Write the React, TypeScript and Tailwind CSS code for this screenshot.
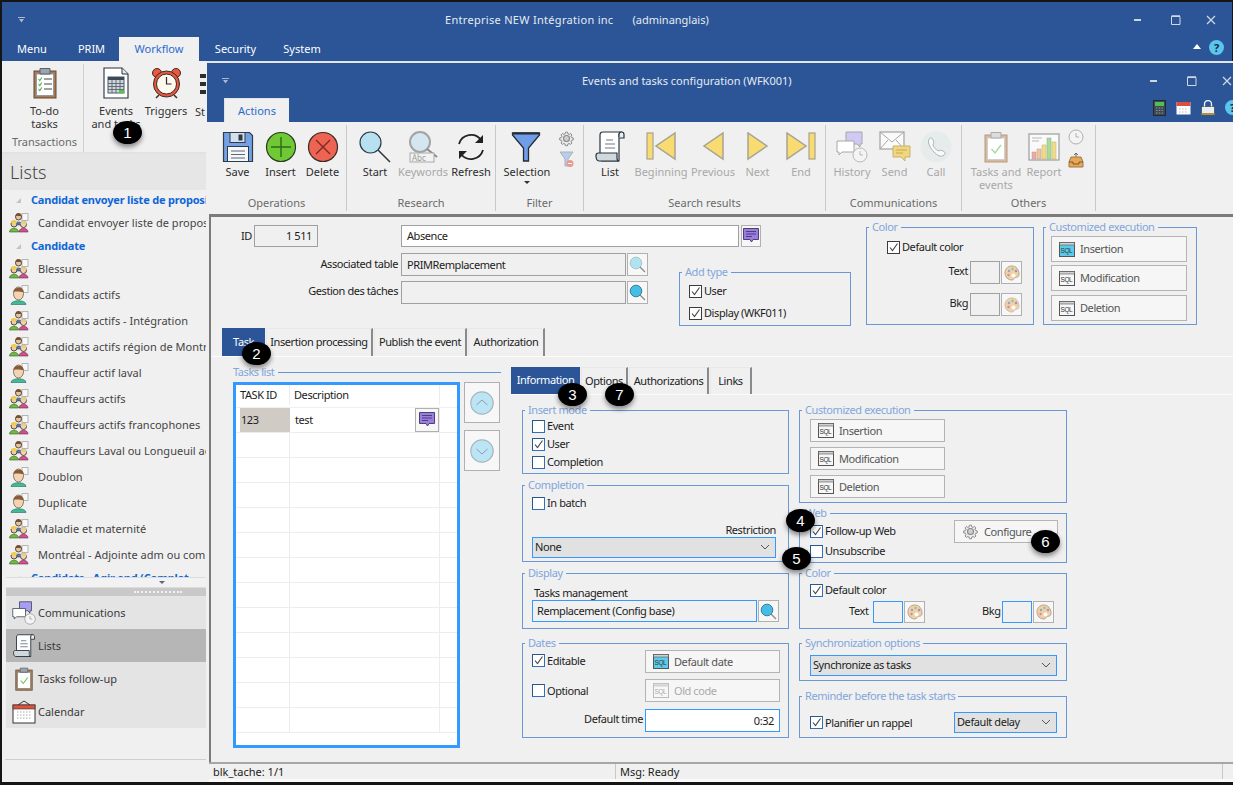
import React from "react";

const D = "#2f3b47";

const Svg = ({ w = 32, h = 32, children, vb }: { w?: number; h?: number; vb?: string; children: React.ReactNode }) => (
  <svg width={w} height={h} viewBox={vb ?? `0 0 ${w} ${h}`} className="block shrink-0">{children}</svg>
);

const SaveIcon = () => (
  <Svg>
    <path d="M1.5 1.5h26l3 3v26h-29z" fill="#74a0e6" stroke={D} strokeWidth="1.2" />
    <rect x="8" y="1.5" width="15" height="10" fill="#d5e0ee" stroke={D} />
    <rect x="16.5" y="3.5" width="4" height="6" fill={D} />
    <rect x="5.5" y="15.5" width="21" height="15" fill="#f5f7f9" stroke={D} />
    <path d="M9 20h14M9 23.5h14M9 27h14" stroke="#5a6672" />
  </Svg>
);
const PlusIcon = () => (
  <Svg>
    <circle cx="16" cy="16" r="14.5" fill="#6fc934" stroke="#2c3a22" strokeWidth="1.2" />
    <path d="M16 6v20M6 16h20" stroke="#2f6a1a" strokeWidth="1.4" />
  </Svg>
);
const XIcon = () => (
  <Svg>
    <circle cx="16" cy="16" r="14.5" fill="#ee6453" stroke="#3a2a28" strokeWidth="1.2" />
    <path d="M9 9l14 14M23 9L9 23" stroke="#7a2a22" strokeWidth="1.4" />
  </Svg>
);
const SearchIcon = () => (
  <Svg>
    <circle cx="11.5" cy="11.5" r="10.5" fill="#b7e0f1" stroke={D} strokeWidth="1.2" />
    <path d="M19 19l12 12" stroke={D} strokeWidth="1.6" />
  </Svg>
);
const KeywordsIcon = () => (
  <Svg>
    <circle cx="13" cy="11" r="10" fill="#d4e7f0" stroke="#a3a3a3" strokeWidth="2" />
    <path d="M20 18l10 8" stroke="#8a8a8a" strokeWidth="2" />
    <rect x="3" y="22" width="24" height="9" fill="#f2f2f2" stroke="#a8a8a8" />
    <text x="5" y="30" fontSize="8" fill="#9a9a9a" fontFamily="Noto Sans">Abc</text>
  </Svg>
);
const RefreshIcon = () => (
  <Svg>
    <path d="M4 13A12.5 12.5 0 0 1 26 9" fill="none" stroke="#222" strokeWidth="1.8" />
    <path d="M28 4v8h-8z" fill="#222" />
    <path d="M28 19A12.5 12.5 0 0 1 6 23" fill="none" stroke="#222" strokeWidth="1.8" />
    <path d="M4 28v-8h8z" fill="#222" />
  </Svg>
);
const FunnelIcon = () => (
  <Svg>
    <path d="M1.5 2h27v2L17.5 17v13h-5V17L1.5 4z" fill="#6f9de8" stroke="#252b33" strokeWidth="1.3" />
    <path d="M2 2.5h26" stroke="#252b33" strokeWidth="2" />
  </Svg>
);
const GearIcon = ({ s = 17, c = "#8a8a8a" }: { s?: number; c?: string }) => (
  <svg width={s} height={s} viewBox="0 0 24 24" className="block shrink-0">
    <path d="M12 1.5l1.8.1.7 3 2.3 1 2.6-1.6 2.5 2.5-1.6 2.6 1 2.3 3 .7v3.6l-3 .7-1 2.3 1.6 2.6-2.5 2.5-2.6-1.6-2.3 1-.7 3h-3.6l-.7-3-2.3-1-2.6 1.6-2.5-2.5 1.6-2.6-1-2.3-3-.7v-3.6l3-.7 1-2.3-1.6-2.6 2.5-2.5 2.6 1.6 2.3-1 .7-3z" transform="translate(2.6 1.8) scale(.78)" fill="#e9e9e9" stroke={c} strokeWidth="1.8" />
    <circle cx="12" cy="12" r="4.2" fill="#cfcfcf" stroke={c} strokeWidth="1.6" />
  </svg>
);
const SmallFunnelIcon = () => (
  <Svg w={16} h={17}>
    <path d="M1 1h13L9 8v7H6V8z" fill="#b4cdf0" stroke="#b0b0b0" />
    <circle cx="11" cy="12.5" r="3.5" fill="#e79a92" />
    <path d="M9 12.5h4" stroke="#fff" />
  </Svg>
);
const ScrollIcon = ({ s = 32 }: { s?: number }) => (
  <svg width={s} height={s} viewBox="0 0 32 32" className="block shrink-0">
    <path d="M6 22V4c0-2 1-3 3-3h19c-2 0-3 1-3 3v26H7" fill="#fff" stroke="#2a3440" strokeWidth="1.2" />
    <path d="M25 6V3.5C25 2 26 1 27.5 1S30 2 30 3.5V7h-5" fill="#e9eef2" stroke="#2a3440" strokeWidth="1.2" />
    <path d="M12 9h7M11 13h10M11 17h10" stroke="#6e7b88" strokeWidth="1.2" />
    <path d="M2 24.5C2 23 3 22 4.5 22H23v5c0 2 1 3 2 3H5c-2 0-3-2-3-5.5z" fill="#cfd9de" stroke="#2a3440" strokeWidth="1.2" />
  </svg>
);
const Tri = ({ dir, bar }: { dir: "l" | "r"; bar?: boolean }) => {
  const c = "#f8db71";
  const s = "#a6a294";
  return (
    <Svg w={bar ? 30 : 22} h={30}>
      {dir === "l" ? (
        <>
          {bar && <rect x="1" y="1" width="6" height="26" fill={c} stroke={s} strokeWidth="1.2" />}
          <path d={bar ? "M29 1v26L10 14z" : "M21 1v26L2 14z"} fill={c} stroke={s} strokeWidth="1.5" />
        </>
      ) : (
        <>
          <path d="M1 1v26l19-13z" fill={c} stroke={s} strokeWidth="1.5" />
          {bar && <rect x="23" y="1" width="6" height="26" fill={c} stroke={s} strokeWidth="1.2" />}
        </>
      )}
    </Svg>
  );
};
const ClockSmall = ({ s = 16, c = "#b0b0b0" }: { s?: number; c?: string }) => (
  <svg width={s} height={s} viewBox="0 0 16 16" className="block shrink-0">
    <circle cx="8" cy="8" r="7" fill="#f4f4f4" stroke={c} />
    <path d="M8 4v4h3" fill="none" stroke={c} />
  </svg>
);
const HistoryIcon = ({ s = 32, dim = true }: { s?: number; dim?: boolean }) => {
  const c = dim ? "#a8a8a8" : "#33404c";
  return (
    <svg width={s} height={s} viewBox="0 0 32 32" className="block shrink-0">
      <path d="M10 1h16v12h-2v3l-3-3H10z" fill={dim ? "#cfc9f3" : "#a99df2"} stroke={c} />
      <path d="M1 10h17v11H6l-3 3v-3H1z" fill="#fff" stroke={c} />
      <circle cx="24" cy="24" r="7" fill="#f4f4f4" stroke={dim ? "#b8b8b8" : "#999"} />
      <path d="M24 20v4h3" fill="none" stroke={dim ? "#b8b8b8" : "#999"} />
    </svg>
  );
};
const SendIcon = () => (
  <Svg w={32} h={32}>
    <rect x="1" y="1" width="24" height="17" fill="#fafafa" stroke="#a8a8a8" strokeWidth="1.3" />
    <path d="M1 1l12 10L25 1M1 18l8-9M25 18l-8-9" fill="none" stroke="#a8a8a8" />
    <path d="M14 15h17v11h-5v4l-4-4h-8z" fill="#efd682" stroke="#c8b26c" />
    <path d="M17 19h11M17 22h7" stroke="#c8a94e" />
  </Svg>
);
const CallIcon = () => (
  <Svg>
    <circle cx="16" cy="16" r="15.5" fill="#e6ecec" />
    <path d="M9 8c2-2 3-1 4 1s1 3 0 4c0 3 3 6 6 7 1-1 2-1 4 0s3 2 1 4c-3 3-7 0-10-3s-7-9-5-13z" fill="#fafafa" stroke="#a9b2b2" />
  </Svg>
);
const ClipCheck = ({ s = 32, dim = true }: { s?: number; dim?: boolean }) => (
  <svg width={s} height={s} viewBox="0 0 24 32" className="block shrink-0">
    <rect x="1" y="4" width="22" height="27" fill={dim ? "#d9b99a" : "#a67b55"} stroke={dim ? "#b69a82" : "#6b5540"} />
    <rect x="3.5" y="7" width="17" height="21.5" fill="#fff" stroke={dim ? "#cfcfcf" : "#888"} />
    <path d="M7 1.5h10V7H7z" fill={dim ? "#dcdcdc" : "#9aa5ae"} stroke={dim ? "#aaa" : "#56626c"} />
    <path d="M7.5 18l3.5 4 6-8" fill="none" stroke={dim ? "#a3dca0" : "#5dc050"} strokeWidth="1.4" />
  </svg>
);
const TodoIcon = () => (
  <svg width="24" height="32" viewBox="0 0 24 32" className="block shrink-0">
    <rect x="1" y="4" width="22" height="27" fill="#a67b55" stroke="#5e4b3a" />
    <rect x="3.5" y="7" width="17" height="21.5" fill="#fff" stroke="#999" />
    <path d="M7 1.5h10V7H7z" fill="#9aa5ae" stroke="#56626c" />
    <path d="M5.5 12l1.3 1.5 2-3M5.5 17l1.3 1.5 2-3M5.5 22l1.3 1.5 2-3" fill="none" stroke="#4db04a" strokeWidth="1.1" />
    <path d="M11 12h8M11 17h8M11 22h8" stroke="#444" />
  </svg>
);
const DocGrid = () => (
  <svg width="26" height="32" viewBox="0 0 26 32" className="block shrink-0">
    <path d="M1 1h18l6 6v24H1z" fill="#fff" stroke="#28323c" strokeWidth="1.1" />
    <path d="M19 1v6h6" fill="#e8e8e8" stroke="#28323c" />
    <rect x="5" y="10" width="16" height="16" fill="#cfd5da" stroke="#4b5865" />
    <rect x="5" y="10" width="16" height="3" fill="#3c4a58" />
    <path d="M5 16.5h16M5 19.5h16M5 22.5h16M9 13v13M13 13v13M17 13v13" stroke="#4b5865" strokeWidth=".8" />
    <rect x="16" y="23" width="5" height="3" fill="#57c14e" />
  </svg>
);
const AlarmIcon = () => (
  <svg width="31" height="32" viewBox="0 0 31 32" className="block shrink-0">
    <circle cx="6" cy="6" r="4.5" fill="#e9583f" stroke="#3b2a28" />
    <circle cx="25" cy="6" r="4.5" fill="#e9583f" stroke="#3b2a28" />
    <path d="M8 28l-3 3M23 28l3 3" stroke="#3b2a28" strokeWidth="1.5" />
    <circle cx="15.5" cy="17" r="13" fill="#e9583f" stroke="#3b2a28" />
    <circle cx="15.5" cy="17" r="10" fill="#fdf9ee" stroke="#3b2a28" />
    <path d="M15.5 10v7h5" fill="none" stroke="#2b2b2b" strokeWidth="1.2" />
  </svg>
);
const TrafficSliver = () => (
  <svg width="20" height="30" viewBox="0 0 20 30" className="block shrink-0">
    <path d="M0 4h6v4H0zM0 12h6v4H0zM0 20h6v4H0z" fill="#2d2d2d" />
    <rect x="6" y="1" width="14" height="28" fill="#2d2d2d" />
  </svg>
);
const ReportIcon = () => (
  <Svg w={32} h={28}>
    <rect x="1" y="1" width="30" height="26" fill="#fafafa" stroke="#a8a8a8" strokeWidth="1.4" />
    <path d="M4 5h10M4 8h7" stroke="#b8b8b8" />
    <rect x="4" y="19" width="4" height="7" fill="#efa9a0" stroke="#b69b97" strokeWidth=".5" />
    <rect x="9" y="16" width="4" height="10" fill="#efc69b" stroke="#b69b97" strokeWidth=".5" />
    <rect x="14" y="12" width="4" height="14" fill="#f4dc86" stroke="#b9ae7e" strokeWidth=".5" />
    <rect x="19" y="5" width="4" height="21" fill="#a7dd97" stroke="#92ad87" strokeWidth=".5" />
    <rect x="24" y="9" width="4" height="17" fill="#f4dc86" stroke="#b9ae7e" strokeWidth=".5" />
  </Svg>
);
const TrayIcon = () => (
  <Svg w={16} h={16}>
    <path d="M8 1v5M6 3l2-2 2 2" fill="none" stroke="#6a6a6a" />
    <path d="M3 5h10l2 5v5H1v-5z" fill="#e9a755" stroke="#9a7a4a" />
    <path d="M1 10h4v2h6v-2h4" fill="none" stroke="#7a5a2a" />
  </Svg>
);
const NoteIcon = () => (
  <Svg w={16} h={16}>
    <path d="M.5.5h15v11H10l-1.5 2.5L7 11.5H.5z" fill="#9b7de0" stroke="#4d3f78" />
    <path d="M3 3.5h10M3 6h10M3 8.5h6" stroke="#4d3f78" />
  </Svg>
);
const PaletteIcon = ({ dim }: { dim?: boolean }) => (
  <Svg w={16} h={16}>
    <path d="M8 1C3 1 1 4.5 1 8c0 4 3 7 7 7 2 0 1.5-2 3-2.5 2-.5 4 0 4-3.5 0-4.5-3-8-7-8z" fill="#f0d0a8" stroke={dim ? "#cdbfae" : "#b5a58f"} />
    <circle cx="5" cy="6" r="1.2" fill="#8aa8c8" />
    <circle cx="8.5" cy="4" r="1.2" fill="#9bbf8a" />
    <circle cx="12" cy="6" r="1.2" fill="#a78ac8" />
    <circle cx="4.5" cy="10" r="1.2" fill="#d88c7c" />
    <circle cx="9.5" cy="10.5" r="2" fill="#fff" />
  </Svg>
);
const MiniSearch = ({ light }: { light?: boolean }) => (
  <Svg w={17} h={17}>
    <circle cx="7" cy="7" r="5.8" fill={light ? "#aee3ef" : "#45bde6"} stroke={light ? "#a8c4cc" : "#3a7f98"} />
    <path d="M11 11l5 5" stroke="#8a8a8a" strokeWidth="1.2" />
  </Svg>
);
const SqlIcon = ({ active, dim }: { active?: boolean; dim?: boolean }) => (
  <svg width="16" height="15" viewBox="0 0 16 15" className="block shrink-0">
    <rect x=".5" y=".5" width="15" height="14" fill={active ? "#5ccbeb" : "#f7f7f7"} stroke={dim ? "#bbb" : "#555"} />
    <rect x=".5" y=".5" width="15" height="2.5" fill={dim ? "#ddd" : "#d0d0d0"} stroke={dim ? "#bbb" : "#555"} strokeWidth=".6" />
    <text x="1.5" y="11" fontSize="6.5" fontFamily="Liberation Sans" fill={dim ? "#aaa" : "#333"}>SQL</text>
  </svg>
);
const ChevronBig = ({ up }: { up?: boolean }) => (
  <Svg w={24} h={24}>
    <circle cx="12" cy="12" r="11.2" fill="#bbe5f4" stroke="#a7b7bd" strokeWidth="1.2" />
    <path d={up ? "M6.5 14L12 9l5.5 5" : "M6.5 10l5.5 5 5.5-5"} fill="none" stroke="#8d9ea6" />
  </Svg>
);
const ChevronDown = () => (
  <Svg w={10} h={6}>
    <path d="M1 1l4 4 4-4" fill="none" stroke="#555" />
  </Svg>
);

const Heads = ({ kind }: { kind: "group" | "one" }) =>
  kind === "group" ? (
    <svg width="20" height="20" viewBox="0 0 20 20" className="block shrink-0">
      <rect x="13" y="0.5" width="6" height="7" fill="#f7f7f7" stroke="#b5b5b5" />
      <circle cx="9.5" cy="4" r="3" fill="#e8c3a0" stroke="#5d4a3c" />
      <path d="M6.5 3a3 3 0 0 1 6 0z" fill="#74523a" />
      <path d="M5 12c0-4 9-4 9 0z" fill="#4a78c8" stroke="#3a4a60" strokeWidth=".6" />
      <circle cx="5" cy="11" r="3" fill="#edcaa6" stroke="#5d4a3c" />
      <path d="M2 10a3 3 0 0 1 6 0z" fill="#f0cf3a" />
      <path d="M.5 19c0-5 9-5 9 0z" fill="#6dbb3e" stroke="#3a5a26" strokeWidth=".6" />
      <circle cx="14.5" cy="11.5" r="3" fill="#f2d3b4" stroke="#5d4a3c" />
      <path d="M11.5 11a3 3 0 0 1 6 0z" fill="#e8d08a" />
      <path d="M10 19c0-5 9-5 9 0z" fill="#d0508a" stroke="#6a2a50" strokeWidth=".6" />
    </svg>
  ) : (
    <svg width="20" height="20" viewBox="0 0 20 20" className="block shrink-0">
      <rect x="13" y="0.5" width="6" height="7" fill="#f7f7f7" stroke="#b5b5b5" />
      <path d="M2 19.5c0-5 15-5 15 0z" fill="#3dbb9a" stroke="#2a6a58" strokeWidth=".6" />
      <ellipse cx="9.5" cy="8.5" rx="5" ry="6.5" fill="#f2d3b4" stroke="#5d4a3c" strokeWidth=".7" />
      <path d="M4.5 7c0-5 10-6 10 0-3 0-7-1-10 0z" fill="#8a5a36" />
    </svg>
  );

const RB = ({ w, icon, label, dim, sub }: { w: string; icon: React.ReactNode; label: React.ReactNode; dim?: boolean; sub?: boolean }) => (
  <div className={`${w} flex flex-col items-center shrink-0`}>
    <div className="h-[36px] flex items-center justify-center">{icon}</div>
    <div className={`text-center text-[11px] leading-[13px] whitespace-nowrap ${dim ? "text-[#a8a8a8]" : "text-[#2c2c2c]"}`}>{label}</div>
    {sub && <div className="mt-[3px] w-0 h-0 border-x-[3px] border-x-transparent border-t-[3px] border-t-[#333]" />}
  </div>
);

const Group = ({ w, label, children, pl }: { w: string; label: string; children: React.ReactNode; pl?: string }) => (
  <div className={`${w} shrink-0 h-[86px] mt-[3px] flex flex-col border-r border-[#c9c9c9]`}>
    <div className={`flex flex-1 pt-[4px] ${pl ?? ""}`}>{children}</div>
    <div className="h-[15px] text-center text-[11px] leading-[14px] text-[#6a6a6a]">{label}</div>
  </div>
);

const WinControls = ({ className }: { className: string }) => (
  <div className={`flex items-center ${className}`}>
    <Svg w={8} h={4}><rect x="0" y="1" width="7" height="2" fill="#cfd6e0" /></Svg>
    <div className="ml-[29px]"><Svg w={10} h={10}><path d="M.5 1.5h8.5v8H.5z" fill="none" stroke="#d3d9e3" strokeWidth="1" /><path d="M.5 1h8.5" stroke="#d3d9e3" strokeWidth="1.5" /></Svg></div>
    <div className="ml-[25px]"><Svg w={10} h={10}><path d="M1 1l8 8M9 1L1 9" stroke="#d3d9e3" strokeWidth="1.2" /></Svg></div>
  </div>
);

const Fs = ({ legend, className, children }: { legend: string; className: string; children?: React.ReactNode }) => (
  <div className={`relative border border-[#6a97d6] shrink-0 ${className}`}>
    <span className="absolute left-[2px] top-[-8px] px-[3px] bg-[#f0f0f0] text-[11px] leading-[14px] whitespace-nowrap text-[#82a6dc]">{legend}</span>
    {children}
  </div>
);

const Chk = ({ label, on, blue, className }: { label: string; on?: boolean; blue?: boolean; className?: string }) => (
  <div className={`flex items-center ${className ?? ""}`}>
    <div className={`relative w-[13px] h-[13px] bg-white border shrink-0 ${blue ? "border-[#2e6fc0] border-t-[#27578f] border-l-[#27578f]" : "border-[#3c3c3c]"}`}>
      {on && <svg width="11" height="11" viewBox="0 0 11 11" className="block"><path d="M2 5.5l2.5 3L9.5 1.5" fill="none" stroke="#444" strokeWidth="1.1" /></svg>}
    </div>
    <span className="ml-[2px] whitespace-nowrap">{label}</span>
  </div>
);

const Inp = ({ className, children }: { className: string; children?: React.ReactNode }) => (
  <div className={`border flex items-center shrink-0 ${className}`}>{children}</div>
);

const IconBtn = ({ className, children }: { className: string; children: React.ReactNode }) => (
  <div className={`border border-[#b0b0b0] bg-[#f7f7f7] flex items-center justify-center shrink-0 ${className}`}>{children}</div>
);

const SqlBtn = ({ label, className, active, dim }: { label: string; className: string; active?: boolean; dim?: boolean }) => (
  <div className={`border border-[#b4b4b4] bg-[#f6f6f6] flex items-center shrink-0 pl-[7px] ${className}`}>
    <SqlIcon active={active} dim={dim} />
    <span className={`ml-[5px] whitespace-nowrap ${dim ? "text-[#aaaaaa]" : "text-[#555]"}`}>{label}</span>
  </div>
);

const Select = ({ label, className }: { label: string; className: string }) => (
  <div className={`border border-[#3399ff] bg-[#e1e1e1] flex items-center justify-between pl-[2px] pr-[5px] pb-[1px] shrink-0 ${className}`}>
    <span className="whitespace-nowrap">{label}</span>
    <ChevronDown />
  </div>
);

const Tab = ({ label, active, className }: { label: string; active?: boolean; className: string }) => (
  <div className={`flex items-center justify-center shrink-0 whitespace-nowrap pb-[1px] ${active ? "bg-[#2b5597] text-white" : "border-t border-l border-[#e8e8e8] border-r-2 border-r-[#8a8a8a] text-[#222]"} ${className}`}>{label}</div>
);

const Badge = ({ n, className }: { n: number; className: string }) => (
  <div className={`absolute w-[29px] h-[23px] rounded-[50%] bg-black text-white flex items-center justify-center text-[15px] font-['Liberation_Sans',sans-serif] shadow-[0_3px_5px_rgba(0,0,0,0.45)] ${className}`}>{n}</div>
);

type Row = { h?: string; l?: string; k?: "group" | "one" };
const rows: Row[] = [
  { h: "Candidat envoyer liste de proposi" },
  { l: "Candidat envoyer liste de propos", k: "group" },
  { h: "Candidate" },
  { l: "Blessure", k: "group" },
  { l: "Candidats actifs", k: "one" },
  { l: "Candidats actifs - Intégration", k: "group" },
  { l: "Candidats actifs région de Montr", k: "group" },
  { l: "Chauffeur actif laval", k: "one" },
  { l: "Chauffeurs actifs", k: "group" },
  { l: "Chauffeurs actifs francophones", k: "group" },
  { l: "Chauffeurs Laval ou Longueuil ac", k: "group" },
  { l: "Doublon", k: "one" },
  { l: "Duplicate", k: "one" },
  { l: "Maladie et maternité", k: "group" },
  { l: "Montréal - Adjointe adm ou com", k: "group" },
  { h: "Candidats - Agir and (Complet" },
];

const NavItem = ({ icon, label, sel }: { icon: React.ReactNode; label: string; sel?: boolean }) => (
  <div className={`h-[33px] flex items-center pl-[4px] ${sel ? "bg-[#b6b6b6]" : "bg-[#e4e4e4]"}`}>
    <div className="w-[28px] flex justify-center">{icon}</div>
    <span className="text-[11px] text-[#3a3a3a] whitespace-nowrap">{label}</span>
  </div>
);

const OuterTab = ({ label, className, active }: { label: string; className: string; active?: boolean }) => (
  <div className={`flex items-center justify-center text-[11px] shrink-0 ${active ? "bg-[#f0f0f0] text-[#2b6ad0]" : "text-white"} ${className}`}>{label}</div>
);

export default function App() {
  const tableRows = Array.from({ length: 13 });
  return (
    <div className="relative w-[1233px] h-[785px] bg-[#151515] overflow-hidden text-[11px] leading-[14px] text-[#1c1c1c] font-['Noto_Sans',sans-serif]">
      <div className="ml-[2px] mr-[1px] pt-[2px] h-[782px] flex flex-col">
        {/* Main window chrome */}
        <div className="h-[35px] bg-[#2b5597] flex items-center relative shrink-0">
          <div className="ml-[16px] w-[7px]">
            <Svg w={7} h={6}><path d="M0 0h7v1H0zM1 2h5L3.5 5.5z" fill="#a9b7cc" /></Svg>
          </div>
          <span className="ml-[420px] text-[#e6ebf3] tracking-[0.3px] whitespace-nowrap">Entreprise NEW Intégration inc</span>
          <span className="ml-[19px] text-[#e6ebf3] whitespace-nowrap">(adminanglais)</span>
          <WinControls className="ml-auto mr-[16px]" />
        </div>
        <div className="h-[24px] bg-[#2b5597] flex items-stretch shrink-0">
          <OuterTab label="Menu" className="w-[62px] pr-[2px]" />
          <OuterTab label="PRIM" className="w-[55px]" />
          <OuterTab label="Workflow" active className="w-[80px]" />
          <OuterTab label="Security" className="w-[73px]" />
          <OuterTab label="System" className="w-[60px]" />
        </div>
        {/* Outer ribbon */}
        <div className="h-[93px] bg-[#f0f0f0] flex pl-[4px] shrink-0 border-b-2 border-[#e2e2e2]">
          <div className="w-[78px] h-[88px] mt-[3px] border-r border-[#d0d0d0] flex flex-col items-center shrink-0">
            <div className="h-[38px] pt-[3px]"><TodoIcon /></div>
            <div className="mt-[2px] text-center text-[#333] leading-[13px]">To-do<br />tasks</div>
            <div className="mt-[5px] text-[#6a6a6a]">Transactions</div>
          </div>
          <div className="w-[58px] ml-[3px] flex flex-col items-center shrink-0 pt-[3px]">
            <div className="h-[38px] pt-[3px]"><DocGrid /></div>
            <div className="mt-[2px] text-center text-[#333] leading-[13px] whitespace-nowrap">Events<br />and tasks</div>
          </div>
          <div className="w-[42px] flex flex-col items-center shrink-0 pt-[3px]">
            <div className="h-[38px] pt-[3px]"><AlarmIcon /></div>
            <div className="mt-[2px] text-center text-[#333] leading-[13px]">Triggers</div>
          </div>
          <div className="ml-[8px] pt-[9px] text-[#333] w-[11px]">
            <div className="h-[35px] ml-[5px]"><TrafficSliver /></div>
            <div>St</div>
          </div>
        </div>

        {/* Sidebar */}
        <div className="w-[204px] flex-1 flex flex-col bg-[#f0f0f0] overflow-hidden">
          <div className="h-[36px] bg-[#e6e6e6] pl-[8px] flex items-center text-[18px] font-light text-[#444] shrink-0">Lists</div>
          <div className="h-[387px] ml-[4px] overflow-hidden shrink-0">
            {rows.map((r, i) =>
              r.h ? (
                <div key={i} className="h-[20px] flex items-center whitespace-nowrap overflow-hidden">
                  <span className="ml-[10px] w-0 h-0 border-l-[5px] border-l-transparent border-b-[5px] border-b-[#c4c4c4]" />
                  <span className="ml-[10px] font-bold text-[11px] tracking-[-0.2px] text-[#0f66d8]">{r.h}</span>
                </div>
              ) : (
                <div key={i} className="h-[26px] flex items-center whitespace-nowrap overflow-hidden">
                  <div className="ml-[3px]"><Heads kind={r.k!} /></div>
                  <span className="ml-[9px] text-[11px] tracking-[0.02px] text-[#444]">{r.l}</span>
                </div>
              )
            )}
          </div>
          <div className="h-[11px] ml-[4px] bg-[#f2f2f2] border-y border-[#dcdcdc] flex justify-end pr-[41px] items-center shrink-0">
            <div className="w-0 h-0 border-x-[3px] border-x-transparent border-t-[3px] border-t-[#666]" />
          </div>
          <div className="h-[8px] ml-[4px] bg-[#c9c9c9] flex justify-end items-center pr-[24px] shrink-0">
            <div className="w-[48px] border-t-2 border-dotted border-[#f2f2f2]" />
          </div>
          <div className="ml-[4px] shrink-0">
            <NavItem icon={<HistoryIcon s={24} dim={false} />} label="Communications" />
            <NavItem icon={<ScrollIcon s={24} />} label="Lists" sel />
            <NavItem icon={<ClipCheck s={24} dim={false} />} label="Tasks follow-up" />
            <NavItem
              icon={
                <svg width="24" height="24" viewBox="0 0 24 24" className="block">
                  <path d="M6 5l6-4 6 4" fill="none" stroke="#333" />
                  <rect x="1" y="5" width="22" height="18" fill="#fff" stroke="#333" />
                  <rect x="1" y="5" width="22" height="4" fill="#e2503c" stroke="#333" strokeWidth=".6" />
                  <path d="M5 12h14M5 15h14M5 18h14" stroke="#aaa" strokeDasharray="1.5 1.5" />
                </svg>
              }
              label="Calendar"
            />
          </div>
          <div className="mt-[31px] ml-[3px] border-t border-[#cfcfcf] flex-1" />
        </div>
      </div>

      {/* Child window */}
      <div className="absolute left-[206px] top-[61px] w-[1027px] h-[721px] border-t-2 border-[#e4e8ee] flex flex-col bg-[#f0f0f0] overflow-hidden">
        <div className="h-[35px] bg-[#2b5597] flex items-center shrink-0 ml-[1px]">
          <div className="ml-[15px] w-[7px]"><Svg w={7} h={6}><path d="M0 0h7v1H0zM1 2h5L3.5 5.500z" fill="#a9b7cc" /></Svg></div>
          <span className="ml-[353px] text-[#e6ebf3] whitespace-nowrap">Events and tasks configuration (WFK001)</span>
          <div className="ml-[358px] shrink-0"><WinControls className="" /></div>
        </div>
        <div className="h-[24px] bg-[#2b5597] flex ml-[1px] shrink-0">
          <div className="ml-[17px] w-[65px] bg-[#f0f0f0] border-l border-t border-[#dfe4ea] text-[#2b6ad0] flex items-center justify-center">Actions</div>
          <div className="ml-auto flex items-center gap-[10px] pb-[5px] mr-[-7px]">
            <Svg w={13} h={16}><rect x=".5" y=".5" width="12" height="15" fill="#3e4a52" stroke="#22282d" /><rect x="2" y="2" width="9" height="4" fill="#4fbf5a" /><path d="M3 8h7M3 10.5h7M3 13h7" stroke="#8a949b" strokeDasharray="1.5 1.3" /></Svg>
            <Svg w={15} h={15}><rect x=".5" y="2" width="14" height="12.5" fill="#fff" /><rect x=".5" y="2" width="14" height="4" fill="#d9503f" /><path d="M3 9h9M3 12h9" stroke="#bbb" strokeDasharray="1.5 1.5" /></Svg>
            <Svg w={14} h={16}><rect x=".5" y="6.5" width="13" height="8" fill="#e9eef2" stroke="#333" strokeWidth=".6" /><path d="M3.5 6.5V4a3.5 3.5 0 0 1 7 0v2.5" fill="none" stroke="#eef2f5" strokeWidth="1.3" /><rect x=".5" y="13" width="13" height="2" fill="#b8903a" /></Svg>
            <div className="w-[15px] h-[15px] rounded-full bg-[#5ac5ee] text-[#1b2a3a] font-bold text-[11px] flex items-center justify-center">?</div>
          </div>
        </div>

        {/* Child ribbon */}
        <div className="h-[92px] bg-[#f0f0f0] flex shrink-0 pl-[1px]">
          <Group w="w-[140px]" label="Operations" pl="pl-[9px]">
            <RB w="w-[43px]" icon={<SaveIcon />} label="Save" />
            <RB w="w-[43px]" icon={<PlusIcon />} label="Insert" />
            <RB w="w-[41px]" icon={<XIcon />} label="Delete" />
          </Group>
          <Group w="w-[149px]" label="Research" pl="pl-[4px]">
            <RB w="w-[48px]" icon={<SearchIcon />} label="Start" />
            <RB w="w-[48px]" icon={<KeywordsIcon />} label="Keywords" dim />
            <RB w="w-[48px]" icon={<RefreshIcon />} label="Refresh" />
          </Group>
          <Group w="w-[88px]" label="Filter">
            <RB w="w-[62px]" icon={<FunnelIcon />} label="Selection" sub />
            <div className="flex flex-col items-center gap-[4px] pt-[1px]">
              <GearIcon />
              <SmallFunnelIcon />
            </div>
          </Group>
          <Group w="w-[242px]" label="Search results">
            <RB w="w-[52px]" icon={<ScrollIcon />} label="List" />
            <RB w="w-[50px]" icon={<Tri dir="l" bar />} label="Beginning" dim />
            <RB w="w-[54px]" icon={<Tri dir="l" />} label="Previous" dim />
            <RB w="w-[35px]" icon={<Tri dir="r" />} label="Next" dim />
            <RB w="w-[52px]" icon={<Tri dir="r" bar />} label="End" dim />
          </Group>
          <Group w="w-[136px]" label="Communications">
            <RB w="w-[52px]" icon={<HistoryIcon />} label="History" dim />
            <RB w="w-[33px]" icon={<SendIcon />} label="Send" dim />
            <RB w="w-[50px]" icon={<CallIcon />} label="Call" dim />
          </Group>
          <Group w="w-[134px]" label="Others" pl="pl-[5px]">
            <RB w="w-[58px]" icon={<ClipCheck />} label={<>Tasks and<br />events</>} dim />
            <RB w="w-[38px]" icon={<ReportIcon />} label="Report" dim />
            <div className="w-[26px] flex flex-col items-center gap-[7px]">
              <ClockSmall />
              <TrayIcon />
            </div>
          </Group>
        </div>

        {/* Body */}
        <div className="ml-[3px] border-l-2 border-t-[3px] border-[#7b7b7b] h-[548px] shrink-0 flex flex-col tracking-[-0.42px]">
          {/* Header form */}
          <div className="h-[111px] shrink-0 flex">
            <div className="w-[655px] shrink-0 pt-[8px]">
              <div className="flex items-center">
                <span className="ml-[30px] w-[12px]">ID</span>
                <Inp className="ml-[1px] w-[64px] h-[22px] border-[#a0a0a0] justify-end pr-[5px]">1 511</Inp>
                <Inp className="ml-[83px] w-[338px] h-[22px] border-[#a0a0a0] bg-white pl-[5px]">Absence</Inp>
                <IconBtn className="ml-[2px] w-[20px] h-[22px]"><NoteIcon /></IconBtn>
              </div>
              <div className="flex">
                <div className="w-[437px] shrink-0 pt-[6px]">
                  <div className="flex items-center">
                    <span className="w-[187px] text-right shrink-0 -mt-[2px]">Associated table</span>
                    <Inp className="ml-[3px] w-[225px] h-[23px] border-[#a0a0a0] pl-[5px]">PRIMRemplacement</Inp>
                    <IconBtn className="ml-[1px] w-[21px] h-[23px]"><MiniSearch light /></IconBtn>
                  </div>
                  <div className="flex items-center mt-[5px]">
                    <span className="w-[187px] text-right shrink-0 -mt-[3px]">Gestion des tâches</span>
                    <Inp className="ml-[3px] w-[225px] h-[23px] border-[#a0a0a0]" />
                    <IconBtn className="ml-[1px] w-[21px] h-[23px]"><MiniSearch /></IconBtn>
                  </div>
                </div>
                <Fs legend="Add type" className="ml-[31px] mt-[25px] w-[172px] h-[54px] pl-[9px] pt-[7px]">
                  <Chk on label="User" className="h-[22px]" />
                  <Chk on label="Display (WKF011)" className="h-[22px]" />
                </Fs>
              </div>
            </div>
            <Fs legend="Color" className="w-[168px] h-[98px] mt-[10px] pl-[20px] pt-[12px]">
              <Chk on label="Default color" />
              <div className="flex items-center justify-end mr-[11px] mt-[7px]">
                <span className="-mt-[3px]">Text</span>
                <Inp className="ml-[2px] w-[30px] h-[23px] border-[#a0a0a0]" />
                <IconBtn className="ml-[1px] w-[21px] h-[23px]"><PaletteIcon /></IconBtn>
              </div>
              <div className="flex items-center justify-end mr-[11px] mt-[9px]">
                <span className="-mt-[3px]">Bkg</span>
                <Inp className="ml-[2px] w-[30px] h-[23px] border-[#a0a0a0]" />
                <IconBtn className="ml-[1px] w-[21px] h-[23px]"><PaletteIcon dim /></IconBtn>
              </div>
            </Fs>
            <Fs legend="Customized execution" className="ml-[9px] w-[154px] h-[98px] mt-[10px] pl-[7px] pt-[8px]">
              <SqlBtn active label="Insertion" className="w-[136px] h-[26px]" />
              <SqlBtn label="Modification" className="w-[136px] h-[26px] mt-[3px]" />
              <SqlBtn label="Deletion" className="w-[136px] h-[26px] mt-[4px]" />
            </Fs>
          </div>

          {/* Main tabs */}
          <div className="h-[29px] shrink-0 flex pl-[11px] border-b border-[#fbfbfb]">
            <Tab active label="Task" className="w-[43px]" />
            <Tab label="Insertion processing" className="w-[107px] ml-[1px]" />
            <Tab label="Publish the event" className="w-[93px] ml-[1px]" />
            <Tab label="Authorization" className="w-[77px] ml-[1px]" />
          </div>

          {/* Task page */}
          <div className="flex flex-1">
            <div className="ml-[22px] w-[268px] shrink-0 pt-[15px]">
              <div className="relative border-t border-[#5f95d8] h-0">
                <span className="absolute left-0 top-[-8px] pr-[4px] bg-[#f0f0f0] text-[#82a6dc]">Tasks list</span>
              </div>
              <div className="flex mt-[9px]">
                <div className="w-[227px] h-[366px] border-[3px] border-[#3399ff] bg-white shrink-0 overflow-hidden">
                  <div className="h-[23px] flex border-b border-[#f0f0f0] pb-[2px]">
                    <div className="w-[54px] pl-[4px] flex items-center border-r border-[#ececec]">TASK ID</div>
                    <div className="w-[150px] pl-[4px] flex items-center border-r border-[#ececec]">Description</div>
                  </div>
                  {tableRows.map((_, i) => (
                    <div key={i} className="h-[25px] flex border-b border-[#ededed]">
                      <div className="w-[54px] border-r border-[#ececec] pl-[4px]">
                        {i === 0 && <div className="-mr-[1px] bg-[#d0cbc5] h-full pl-[1px] flex items-center">123</div>}
                      </div>
                      <div className="w-[150px] pl-[5px] flex items-center border-r border-[#ececec] justify-between">
                        {i === 0 && <span>test</span>}
                        {i === 0 && <IconBtn className="w-[24px] h-[24px]"><NoteIcon /></IconBtn>}
                      </div>
                    </div>
                  ))}
                </div>
                <div className="ml-[4px] flex flex-col gap-[7px]">
                  <IconBtn className="w-[36px] h-[41px]"><ChevronBig up /></IconBtn>
                  <IconBtn className="w-[36px] h-[41px]"><ChevronBig /></IconBtn>
                </div>
              </div>
            </div>

            <div className="ml-[10px] flex-1 pt-[10px] flex flex-col">
              <div className="h-[28px] flex border-b border-[#fbfbfb] shrink-0">
                <Tab active label="Information" className="w-[69px]" />
                <Tab label="Options" className="w-[47px] ml-[1px]" />
                <Tab label="Authorizations" className="w-[80px] ml-[1px]" />
                <Tab label="Links" className="w-[42px] ml-[1px]" />
              </div>
              <div className="flex pl-[11px] pt-[15px]">
                <div className="w-[267px] shrink-0">
                  <Fs legend="Insert mode" className="h-[64px] pl-[9px] pt-[6px]">
                    <Chk blue label="Event" className="h-[18px]" />
                    <Chk blue on label="User" className="h-[18px]" />
                    <Chk blue label="Completion" className="h-[18px]" />
                  </Fs>
                  <Fs legend="Completion" className="mt-[11px] h-[77px] pl-[9px] pr-[12px] pt-[9px]">
                    <Chk blue label="In batch" className="h-[16px]" />
                    <div className="text-right mt-[12px]">Restriction</div>
                    <Select label="None" className="h-[21px]" />
                  </Fs>
                  <Fs legend="Display" className="mt-[11px] h-[56px] pl-[9px] pt-[12px]">
                    <div className="pl-[2px]">Tasks management</div>
                    <div className="flex">
                      <Inp className="w-[225px] h-[22px] border-[#3399ff] pl-[4px]">Remplacement (Config base)</Inp>
                      <IconBtn className="ml-[1px] w-[21px] h-[22px]"><MiniSearch /></IconBtn>
                    </div>
                  </Fs>
                  <Fs legend="Dates" className="mt-[14px] h-[95px] pl-[9px] pr-[8px] pt-[6px]">
                    <div className="flex items-center justify-between h-[23px]">
                      <Chk blue on label="Editable" className="-mt-[2px]" />
                      <SqlBtn active label="Default date" className="w-[135px] h-[23px]" />
                    </div>
                    <div className="flex items-center justify-between h-[23px] mt-[6px]">
                      <Chk blue label="Optional" />
                      <SqlBtn dim label="Old code" className="w-[135px] h-[23px]" />
                    </div>
                    <div className="flex items-center justify-end mt-[7px]">
                      <span className="mr-[2px] -mt-[3px]">Default time</span>
                      <Inp className="w-[135px] h-[23px] border-[#3399ff] bg-white justify-end pr-[5px]">0:32</Inp>
                    </div>
                  </Fs>
                </div>
                <div className="ml-[10px] w-[268px] shrink-0">
                  <Fs legend="Customized execution" className="h-[93px] pl-[10px] pt-[8px]">
                    <SqlBtn label="Insertion" className="w-[135px] h-[23px]" />
                    <SqlBtn label="Modification" className="w-[135px] h-[23px] mt-[5px]" />
                    <SqlBtn label="Deletion" className="w-[135px] h-[23px] mt-[5px]" />
                  </Fs>
                  <Fs legend="Web" className="mt-[10px] h-[50px] pl-[10px] pt-[7px] flex">
                    <div>
                      <Chk blue on label="Follow-up Web" className="h-[20px]" />
                      <Chk blue label="Unsubscribe" className="h-[20px]" />
                    </div>
                    <div className="ml-auto mr-[8px] mt-[-1px] w-[104px] h-[23px] border border-[#b4b4b4] bg-[#f6f6f6] flex items-center pl-[7px] text-[#555]">
                      <GearIcon />
                      <span className="ml-[5px]">Configure</span>
                    </div>
                  </Fs>
                  <Fs legend="Color" className="mt-[10px] h-[56px] pl-[10px] pt-[8px]">
                    <Chk blue on label="Default color" className="h-[16px]" />
                    <div className="flex items-center mt-[3px] ml-[39px]">
                      <span className="w-[22px] -mt-[2px]">Text</span>
                      <Inp className="ml-[2px] w-[30px] h-[22px] border-[#3399ff]" />
                      <IconBtn className="ml-[1px] w-[21px] h-[22px]"><PaletteIcon /></IconBtn>
                      <span className="ml-[57px] w-[18px] -mt-[2px]">Bkg</span>
                      <Inp className="ml-[2px] w-[30px] h-[22px] border-[#3399ff]" />
                      <IconBtn className="ml-[1px] w-[21px] h-[22px]"><PaletteIcon /></IconBtn>
                    </div>
                  </Fs>
                  <Fs legend="Synchronization options" className="mt-[14px] h-[38px] pl-[10px] pt-[11px]">
                    <Select label="Synchronize as tasks" className="w-[247px] h-[21px]" />
                  </Fs>
                  <Fs legend="Reminder before the task starts" className="mt-[15px] h-[42px] pl-[10px] pt-[15px] flex">
                    <Chk blue on label="Planifier un rappel" className="h-[21px]" />
                    <Select label="Default delay" className="ml-auto mr-[9px] w-[103px] h-[21px]" />
                  </Fs>
                </div>
              </div>
            </div>
          </div>
        </div>

        {/* Status bar */}
        <div className="ml-[3px] flex-1 border-t-2 border-b-[3px] border-t-[#a6a6a6] border-b-[#fafafa] flex items-center">
          <div className="pl-[4px] w-[407px] h-full flex items-center border-r border-[#c8c8c8]">blk_tache: 1/1</div>
          <div className="pl-[4px] flex-1 flex items-center">Msg: Ready</div>
          <div className="mr-[10px] h-full border-l border-[#c8c8c8]" />
        </div>
      </div>

      {/* Main window corner help */}
      <div className="absolute left-[1193px] top-[44px] w-0 h-0 border-x-[4px] border-x-transparent border-b-[5px] border-b-white" />
      <div className="absolute left-[1209px] top-[40px] w-[15px] h-[15px] rounded-full bg-[#5ac5ee] text-[#1b2a3a] font-bold text-[11px] flex items-center justify-center">?</div>

      <Badge n={1} className="left-[113px] top-[121px]" />
      <Badge n={2} className="left-[242px] top-[342px]" />
      <Badge n={3} className="left-[558px] top-[383px]" />
      <Badge n={7} className="left-[605px] top-[383px]" />
      <Badge n={4} className="left-[786px] top-[509px]" />
      <Badge n={5} className="left-[782px] top-[547px]" />
      <Badge n={6} className="left-[1031px] top-[530px]" />
    </div>
  );
}
